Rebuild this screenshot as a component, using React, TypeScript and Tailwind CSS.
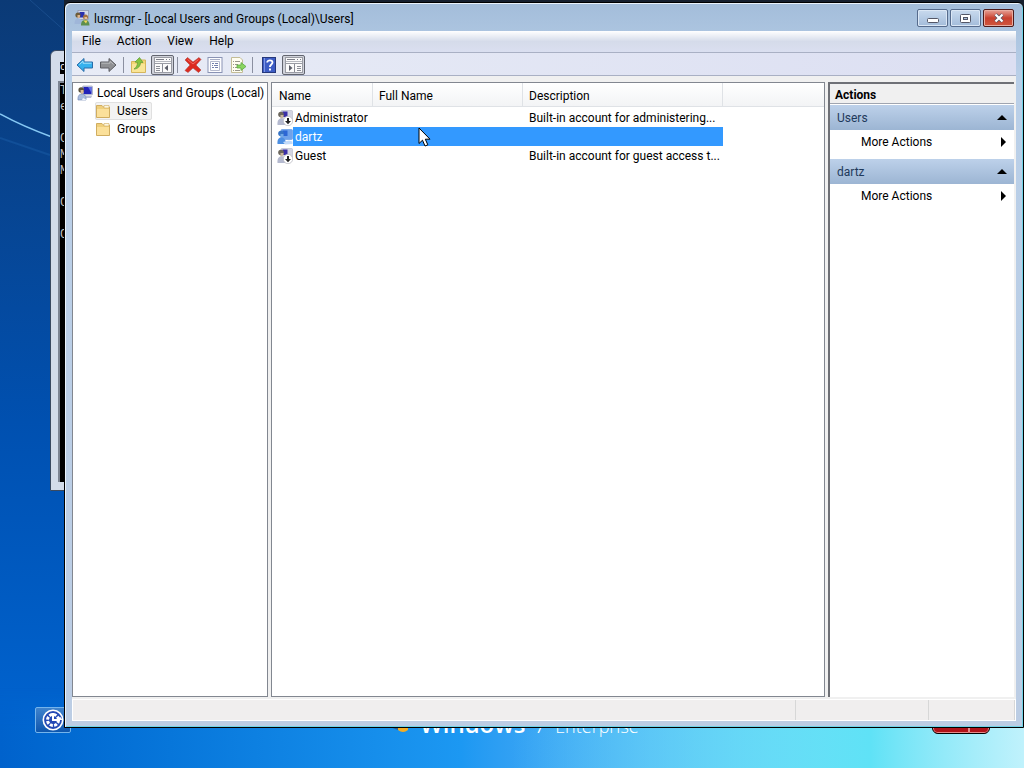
import React from "react";

const consoleLines = ["T", "e", "", "C", "M", "M", "", "C", "", "C"];

const users = [
  { name: "Administrator", fullName: "", description: "Built-in account for administering...", disabled: true },
  { name: "dartz", fullName: "", description: "", disabled: false },
  { name: "Guest", fullName: "", description: "Built-in account for guest access t...", disabled: true },
];

const BackIcon = () => (
  <svg width="18" height="18" viewBox="0 0 18 18">
    <path d="M1 9 L8 2.5 V6 H16.500 V12 H8 V15.500 Z" fill="#35b1ee" stroke="#2a6da8" strokeLinejoin="round" />
    <path d="M3.500 8.500 L7 5.200 V7.200 H15.500" fill="none" stroke="#a5e2fb" />
  </svg>
);

const ForwardIcon = () => (
  <svg width="18" height="18" viewBox="0 0 18 18">
    <path d="M17 9 L10 2.5 V6 H1.500 V12 H10 V15.500 Z" fill="#8f9093" stroke="#5c5d62" strokeLinejoin="round" />
    <path d="M2.500 7.200 H11 V5.200 L14.500 8.500" fill="none" stroke="#b9babd" />
  </svg>
);

const UpFolderIcon = () => (
  <svg width="18" height="18" viewBox="0 0 18 18">
    <path d="M1.500 5.500 H8 L9.500 4 H15.500 V16.500 H1.500 Z" fill="#f3d674" stroke="#d5b65c" />
    <path d="M2 8 H15 V16 H2 Z" fill="#f9e596" />
    <path d="M4 13 C6.500 11.500 7.500 9 7.500 6.500 L5 6 L9.500 1.500 L13 6.500 L10.500 6.500 C10.500 10 8 13 4 13 Z" fill="#86c440" stroke="#5b9a34" strokeWidth="0.7" />
  </svg>
);

const PaneIcon = ({ side }: { side: "left" | "right" }) => (
  <svg width="18" height="16" viewBox="0 0 18 16">
    <rect x="0.5" y="0.5" width="17" height="15" fill="#fbfbfb" stroke="#9a9ca4" />
    <path d="M2 2.500 H10 M12 2.500 H13 M15 2.500 H16" stroke="#7c7e88" />
    <path d="M1 4.500 H17" stroke="#b7b9c0" />
    <path d="M1 6.500 H17" stroke="#9a9ca4" />
    {side === "left" ? (
      <>
        <path d="M8.500 7 V15 M2 9.500 H6 M2 11.500 H6 M2 13.500 H6" stroke="#8b8d96" />
        <path d="M14 8 V14 L10.500 11 Z" fill="#5c5e69" />
      </>
    ) : (
      <>
        <path d="M9.500 7 V15 M12 9.500 H16 M12 11.500 H16 M12 13.500 H16" stroke="#8b8d96" />
        <path d="M4 8 V14 L7.500 11 Z" fill="#5c5e69" />
      </>
    )}
  </svg>
);

const DeleteIcon = () => (
  <svg width="18" height="18" viewBox="0 0 18 18">
    <path d="M3.500 1.500 L9 6 L15 1.500 L17 3.500 L12 9 L17 14 L14.500 16.500 L9 12 L4 16.500 L1 14.500 L6 9 L1 4 Z" fill="#dc2a1f" stroke="#b0443d" strokeWidth="0.600" strokeLinejoin="round" />
    <path d="M3.500 3.500 L9 8 L14.500 3.500" fill="none" stroke="#f0695f" />
  </svg>
);

const PropertiesIcon = () => (
  <svg width="16" height="16" viewBox="0 0 16 16">
    <rect x="1" y="0.500" width="14" height="15" fill="#fdfdff" stroke="#8a93b4" />
    <path d="M3.500 4.500 H12.500 V13.500 H3.500 Z" fill="#fff" stroke="#b4b9cd" />
    <path d="M5 6.500 H7 M8 6.500 H11 M5 8.500 H6 M7 8.500 H11 M5 10.500 H7 M8 10.500 H11" stroke="#7480ab" />
    <path d="M3 2.500 H13" stroke="#a6adc6" />
  </svg>
);

const ExportIcon = () => (
  <svg width="18" height="18" viewBox="0 0 18 18">
    <path d="M2.500 1.500 H11 L13.500 4 V16.500 H2.500 Z" fill="#fffdf0" stroke="#c4bd96" />
    <path d="M4 5.500 H5 M6 5.500 H11 M4 8.500 H5 M6 8.500 H9 M4 11.500 H5 M6 11.500 H9 M4 14.500 H5 M6 14.500 H11" stroke="#98968b" />
    <path d="M8 9 H12 V6.500 L17 10.500 L12 14.500 V12 H8 Z" fill="#8ad55f" stroke="#5ba742" strokeWidth="0.800" />
  </svg>
);

const HelpIcon = () => (
  <svg width="14" height="16" viewBox="0 0 14 16">
    <rect x="0.5" y="0.5" width="13" height="15" fill="#3d5cc4" stroke="#26387c" />
    <path d="M2.500 1 V15" stroke="#7f97e4" />
    <path d="M5.200 5.500 C5.200 2.600 10.500 2.600 10.500 5.500 C10.500 7.500 7.900 7.500 7.900 10" fill="none" stroke="#fff" strokeWidth="1.800" />
    <rect x="7" y="11.500" width="2" height="2" fill="#fff" />
  </svg>
);

const ComputerUserIcon = () => (
  <svg width="16" height="16" viewBox="0 0 16 16" className="shrink-0">
    <rect x="5.500" y="1" width="10" height="9" rx="1" fill="#c6cce0" stroke="#8d95b5" strokeWidth="0.600" />
    <rect x="6.500" y="2" width="8" height="7" fill="#2222b8" />
    <path d="M11 2 H14.500 V8 Z" fill="#5f6fe8" />
    <path d="M9 11 H15 L14 13 H8 Z" fill="#b9bfd6" />
    <circle cx="4.200" cy="5" r="2.800" fill="#5b543f" />
    <path d="M3.500 5 H6.500 V7.500 L5.500 9 H4 Z" fill="#dcbb96" />
    <path d="M1 15 C0.500 10 3 9 5 9 C8 9 9.500 12 9 15 Z" fill="#a9bcdd" stroke="#6d83b2" strokeWidth="0.600" />
    <path d="M6 13 L10 15 H5 Z" fill="#f1f4fb" />
  </svg>
);

const TitleIcon = () => (
  <svg width="16" height="16" viewBox="0 0 16 16" className="shrink-0">
    <rect x="4" y="0.500" width="10.500" height="9" fill="#d3d8e8" stroke="#8389a3" strokeWidth="0.600" />
    <rect x="5.500" y="2" width="5" height="5.500" fill="#2a2fae" />
    <circle cx="4" cy="5" r="2.600" fill="#6d5c3a" />
    <path d="M3.500 5 H6 V7 L5 8 H3.500 Z" fill="#dbb389" />
    <circle cx="11.500" cy="7" r="2.500" fill="#a4713e" />
    <path d="M10.500 7 H13 V9 H10.500 Z" fill="#e5bf98" />
    <path d="M0.500 14 C0.500 9.500 2.500 8.500 4.500 8.500 C7 8.500 8.500 11 8 14 Z" fill="#9fb6d9" />
    <path d="M7 15.500 C7 11 9 10 11.500 10 C14 10 15.500 12 15.500 15.500 Z" fill="#5e8f4e" />
    <path d="M9.500 10.500 L12 13.500 L13.500 10.500 Z" fill="#f6d75c" />
  </svg>
);

const UserIcon = ({ disabled }: { disabled: boolean }) => (
  <svg width="16" height="16" viewBox="0 0 16 16" className="shrink-0">
    <rect x="4" y="0.500" width="11.500" height="10" rx="1" fill={disabled ? "#d3d5e2" : "#6fa2ea"} stroke={disabled ? "#b4b7c8" : "#5a94e2"} strokeWidth="0.600" />
    <rect x="5.500" y="1.500" width="5" height="5.500" fill={disabled ? "#3a2fa8" : "#2c66d4"} />
    <circle cx="4" cy="4.500" r="2.800" fill={disabled ? "#6b665c" : "#3674c6"} />
    <path d="M3.500 5 H6.500 V7 L5 8.500 H3.500 Z" fill={disabled ? "#c9b79b" : "#71a9e8"} />
    <path d="M0.500 15 C0 10 2 8.500 4.500 8.500 C7 8.500 9 11 9 15 Z" fill={disabled ? "#b4b9cf" : "#4c8fe2"} />
    {disabled ? (
      <>
        <circle cx="11" cy="11" r="4.700" fill="#fff" stroke="#b5b5bd" strokeWidth="0.700" />
        <path d="M10 8 H12 V11 H14 L11 14.200 L8 11 H10 Z" fill="#222" />
      </>
    ) : (
      <path d="M6 13 L12 11.500 L15.500 12.500 V15 L8 15.500 Z" fill="#c2daf8" />
    )}
  </svg>
);

const FolderIcon = () => (
  <svg width="16" height="16" viewBox="0 0 16 16" className="shrink-0">
    <path d="M1.500 2.500 H7 L8.500 4 H14.500 V14.500 H1.500 Z" fill="#efcf7c" stroke="#d0ad60" />
    <path d="M9 2.500 H14 V5 H9 Z" fill="#fdf7e0" stroke="#d0ad60" strokeWidth="0.600" />
    <path d="M2 6 H14 V14 H2 Z" fill="#fbe09a" />
  </svg>
);

const ToolbarSeparator = () => <span className="h-4 w-px bg-[#8b90a0]" />;

const TreeItem = ({ label, icon, selected, nested }: { label: string; icon: React.ReactNode; selected?: boolean; nested?: boolean }) => (
  <li className={nested ? "ml-[22px]" : "ml-1"}>
    <button className={`flex h-[18px] items-center whitespace-nowrap rounded-xs pr-1 ${nested ? "gap-1.5" : "gap-1"} ${selected ? "bg-[#f3f3f3] outline -outline-offset-1 outline-[#e0e0e0]" : ""}`}>
      {icon}
      {label}
    </button>
  </li>
);

const ActionSection = ({ title }: { title: string }) => (
  <section className="mb-[5px]">
    <button className="flex h-[25px] w-full items-center justify-between bg-linear-to-b from-[#bdd1ea] to-[#9cb5d3] px-[7px] text-[#1e395b]">
      {title}
      <svg width="10" height="5" viewBox="0 0 10 5">
        <path d="M0 5 L5 0 L10 5 Z" fill="#000" />
      </svg>
    </button>
    <button className="flex h-6 w-full items-center justify-between pl-[31px] pr-2">
      More Actions
      <svg width="5" height="10" viewBox="0 0 5 10">
        <path d="M0 0 L5 5 L0 10 Z" fill="#000" />
      </svg>
    </button>
  </section>
);

const Desktop = () => (
  <>
    <div className="absolute inset-x-0 bottom-0 h-20 bg-linear-to-r from-[#0062cc] via-[#1c98f2] via-45% to-[#b4f0fb] mask-t-from-50%" />
    <div className="absolute bottom-0 right-0 h-20 w-1/2 bg-linear-to-r from-transparent via-[#5fe2f6] via-70% to-[#c0f2fc]" />
    <svg className="absolute left-0 top-0" width="70" height="180" viewBox="0 0 70 180" fill="none">
      <path d="M0 114 Q24 127 52 137" stroke="#86c8f4" strokeWidth="1.500" />
      <path d="M30 0 L66 32" stroke="#23599a" strokeWidth="0.600" />
      <path d="M0 138 L50 155" stroke="#114f98" strokeWidth="2" />
    </svg>

    {/* command prompt behind the console */}
    <div className="absolute left-[50px] top-[50px] flex h-[441px] w-20 flex-col rounded-tl-md border border-[#3a4a60] bg-[#d3dce9] pb-2 pl-[7px]">
      <div className="flex h-[30px] items-center pl-0.5 pt-1">
        <span className="bg-black font-mono text-[10px] leading-3 text-white">c:</span>
      </div>
      <pre className="flex-1 border-l-2 border-t-2 border-[#7d8592] bg-black font-['Liberation_Mono',monospace] text-xs leading-4 text-[#c0c0c0]">
        {consoleLines.join("\n")}
      </pre>
    </div>

    <button aria-label="Ease of access" className="absolute bottom-[35px] left-[35px] flex h-[26px] w-9 items-center justify-center rounded-xs border border-[#74b4ec] bg-linear-to-b from-[#3f83cc] to-[#0c56ae]">
      <svg width="22" height="22" viewBox="0 0 22 22" fill="none">
        <circle cx="11" cy="11" r="9.700" fill="#2449b4" stroke="#fff" strokeWidth="1.600" />
        <circle cx="11" cy="11" r="5.500" stroke="#fff" strokeWidth="3" strokeDasharray="3 1.300" />
        <path d="M11 4 V11 H18" stroke="#fff" strokeWidth="2" />
        <path d="M18 7.500 L20.500 11 H15.500 Z" fill="#fff" />
      </svg>
    </button>

    <div className="absolute bottom-7 left-[388px] flex items-baseline gap-2 font-['Open_Sans',sans-serif] leading-8 text-white">
      <svg width="24" height="20" viewBox="0 0 24 20">
        <path d="M0 13 Q4 11 10 13 V17 Q4 15 0 13 Z" fill="#2d5f94" />
        <path d="M10 9 H20 V17 Q15 21 10 17 Z" fill="#f5ad22" />
      </svg>
      <span className="text-2xl font-semibold">Windows</span>
      <span className="text-2xl font-light">7</span>
      <span className="text-lg font-light">Enterprise</span>
    </div>

    <div className="absolute bottom-[34px] right-[34px] flex h-7 w-[58px] overflow-hidden rounded-md border border-black bg-[#b01218]">
      <button aria-label="Shut down" className="flex-1 rounded-bl border border-[#e68a8a]" />
      <button aria-label="Shut down options" className="w-5 rounded-br border border-[#e68a8a]" />
    </div>
  </>
);

const TitleBar = () => (
  <header className="flex h-7 items-center pl-0.5 pt-0.5">
    <TitleIcon />
    <h1 className="flex-1 pl-1 pt-0.5">lusrmgr - [Local Users and Groups (Local)\Users]</h1>
    <div className="mr-0.5 flex gap-0.5">
      <button aria-label="Minimize" className="flex h-[18px] w-[31px] items-center justify-center rounded-xs border border-[#566b8c] bg-linear-to-b from-[#c9daee] via-[#b6cbe4] via-50% to-[#a3bcda] pt-1 shadow-[inset_0_0_0_1px_#dbe7f5]">
        <svg width="12" height="5" viewBox="0 0 12 5">
          <rect x="0.5" y="0.5" width="11" height="4" rx="1" fill="#fff" stroke="#535666" />
        </svg>
      </button>
      <button aria-label="Maximize" className="flex h-[18px] w-[31px] items-center justify-center rounded-xs border border-[#566b8c] bg-linear-to-b from-[#c9daee] via-[#b6cbe4] via-50% to-[#a3bcda] shadow-[inset_0_0_0_1px_#dbe7f5]">
        <svg width="11" height="9" viewBox="0 0 11 9">
          <rect x="0.5" y="0.5" width="10" height="8" rx="1" fill="#fff" stroke="#535666" />
          <rect x="3.500" y="3.500" width="4" height="2" fill="#a9c0dc" stroke="#535666" />
        </svg>
      </button>
      <button aria-label="Close" className="flex h-[18px] w-[31px] items-center justify-center rounded-xs border border-[#4d1a1a] bg-linear-to-b from-[#e5a197] via-[#c8402f] via-50% to-[#d0573f] shadow-[inset_0_0_0_1px_#e9aca0]">
        <svg width="12" height="10" viewBox="0 0 12 10">
          <path d="M2.500 1.500 L9.500 8.500 M9.500 1.500 L2.500 8.500" stroke="#535666" strokeWidth="3.600" />
          <path d="M2.500 1.500 L9.500 8.500 M9.500 1.500 L2.500 8.500" stroke="#fff" strokeWidth="2.200" />
        </svg>
      </button>
    </div>
  </header>
);

const Toolbar = () => (
  <div className="flex h-[23px] items-center border-b border-[#a9b0c4] bg-linear-to-r from-[#e8ecf6] to-[#dcdff2] pl-1 pt-0.5">
    <button aria-label="Back"><BackIcon /></button>
    <button aria-label="Forward" className="ml-[5px] mr-1.5"><ForwardIcon /></button>
    <ToolbarSeparator />
    <button aria-label="Up one level" className="ml-1.5 mr-[3px]"><UpFolderIcon /></button>
    <button aria-label="Show or hide console tree" className="mr-[3px] flex h-5 w-[23px] items-center justify-center rounded-xs border border-[#62656f] bg-[#d0d2da]">
      <PaneIcon side="left" />
    </button>
    <ToolbarSeparator />
    <button aria-label="Delete" className="ml-1.5 mr-[5px]"><DeleteIcon /></button>
    <button aria-label="Properties" className="mr-1.5"><PropertiesIcon /></button>
    <button aria-label="Export list" className="mr-[5px]"><ExportIcon /></button>
    <ToolbarSeparator />
    <button aria-label="Help" className="ml-[9px] mr-1.5"><HelpIcon /></button>
    <button aria-label="Show or hide action pane" className="flex h-5 w-[23px] items-center justify-center rounded-xs border border-[#62656f] bg-[#d0d2da]">
      <PaneIcon side="right" />
    </button>
  </div>
);

const UserTable = () => (
  <div className="flex-1 overflow-hidden border border-[#828790] bg-white">
    <table className="w-full table-fixed border-separate border-spacing-0 whitespace-nowrap text-left">
      <thead>
        <tr className="h-6 bg-linear-to-b from-white to-[#f2f3f5]">
          <th className="w-[101px] border-b border-r border-[#dfe2e6] px-[7px] pb-0 pt-0.5 font-normal">Name</th>
          <th className="w-[150px] border-b border-r border-[#dfe2e6] px-1.5 pb-0 pt-0.5 font-normal">Full Name</th>
          <th className="w-[200px] border-b border-r border-[#dfe2e6] px-1.5 pb-0 pt-0.5 font-normal">Description</th>
          <th aria-hidden="true" className="border-b border-[#dfe2e6]" />
        </tr>
      </thead>
      <tbody className="before:block before:h-px">
        {users.map(({ name, fullName, description, disabled }) => {
          const selected = name === "dartz";
          const cell = selected ? "bg-[#3399ff] text-white" : "";
          return (
            <tr key={name} className="h-[19px]">
              <td className="p-0">
                <div className="flex h-[19px] items-center pl-[5px]">
                  <UserIcon disabled={disabled} />
                  <span className={`flex h-full flex-1 items-center pl-0.5 ${cell}`}>{name}</span>
                </div>
              </td>
              <td className={`px-1.5 py-0 ${cell}`}>{fullName}</td>
              <td className={`px-1.5 py-0 ${cell}`}>{description}</td>
              <td className="p-0" />
            </tr>
          );
        })}
      </tbody>
    </table>
  </div>
);

const App = () => {
  return (
    <div className="relative h-screen overflow-hidden bg-linear-to-b from-[#0b3a76] via-[#0050b0] via-55% to-[#0066d4] font-[Roboto,sans-serif] text-xs text-black">
      <Desktop />

      <div className="absolute left-16 right-0 top-0 h-4 bg-[#16202e]" />
      <main className="absolute bottom-10 left-16 right-0 top-0.5 flex flex-col rounded-t-md border border-black bg-linear-to-b from-[#a3bdda] via-[#b9cfe8] via-10% to-[#bccde4] px-1.5 pb-1.5 shadow-[inset_1px_1px_0_#eaf3fc,inset_-1px_-1px_0_#6fd3e6]">
        <div className="flex flex-1 flex-col px-px">
          <TitleBar />
          <div className="flex flex-1 flex-col bg-[#f0f0f0]">
            <nav className="flex h-[22px] items-center border-b border-[#a9b0c4] bg-linear-to-b from-white via-[#d5dbea] via-50% to-[#dadff0] pb-0.5 pl-0.5">
              {["File", "Action", "View", "Help"].map((item) => (
                <button key={item} className="px-2">{item}</button>
              ))}
            </nav>
            <Toolbar />

            <div className="mt-1.5 flex flex-1 gap-[3px] pr-0.5">
              <ul className="w-[196px] border border-[#828790] bg-white pt-px">
                <TreeItem label="Local Users and Groups (Local)" icon={<ComputerUserIcon />} />
                <TreeItem label="Users" icon={<FolderIcon />} selected nested />
                <TreeItem label="Groups" icon={<FolderIcon />} nested />
              </ul>
              <UserTable />
              <aside className="w-[186px] border-l-2 border-t-2 border-[#6e7076] bg-white">
                <h2 className="mb-px h-5 border-b border-[#a0a5b0] bg-[#f0f0f0] pl-[5px] pt-px leading-5 font-bold">Actions</h2>
                <ActionSection title="Users" />
                <ActionSection title="dartz" />
              </aside>
            </div>

            <footer className="mt-0.5 flex h-[22px] border border-white bg-[#f0eeee]">
              <span className="flex-1" />
              <span className="w-[133px] border-l border-[#d7d7d7]" />
              <span className="w-[87px] border-x border-[#d7d7d7]" />
            </footer>
          </div>
        </div>
      </main>

      {/* mouse pointer */}
      <svg className="pointer-events-none absolute left-[418px] top-[127px]" width="14" height="21" viewBox="0 0 14 21">
        <path d="M1 1 V16.500 L4.500 13.200 L7 19 L9.800 17.800 L7.300 12.200 H12 Z" fill="#fff" stroke="#000" />
      </svg>
    </div>
  );
};

export default App;
